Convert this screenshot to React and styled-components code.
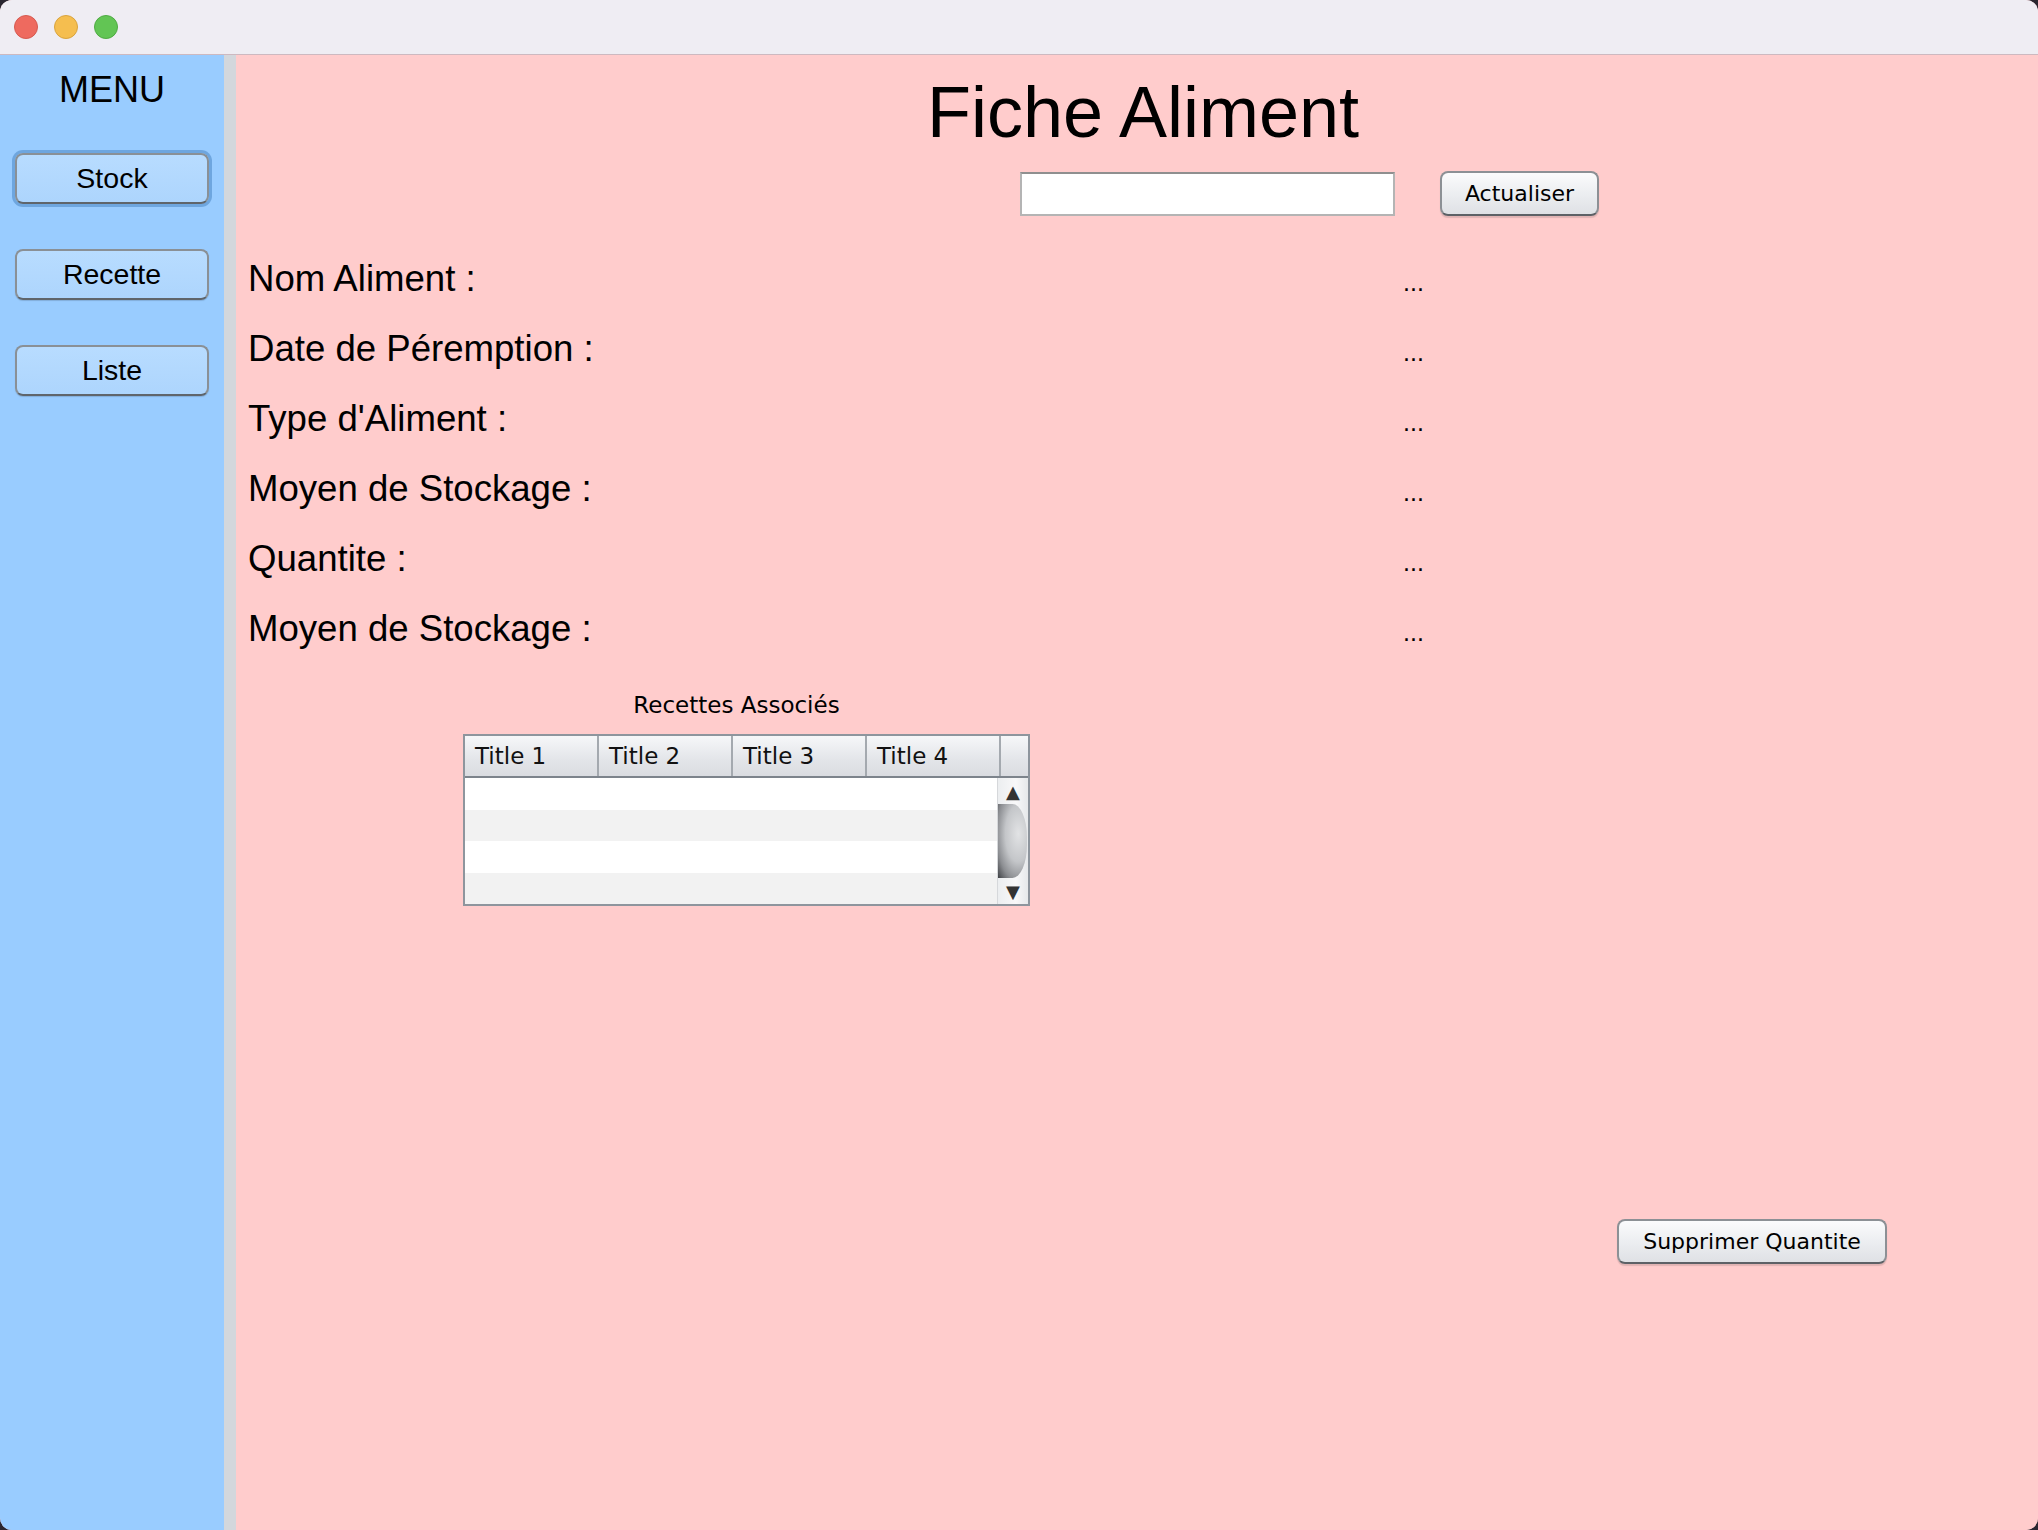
import React from 'react'
import styled, { createGlobalStyle } from 'styled-components'

const GlobalStyle = createGlobalStyle`
  html, body {
    margin: 0;
    padding: 0;
    background: #2a2630;
  }
  * {
    box-sizing: border-box;
  }
`

const fields = [
  'Nom Aliment :',
  'Date de Péremption :',
  "Type d'Aliment :",
  'Moyen de Stockage :',
  'Quantite :',
  'Moyen de Stockage :',
]

const columns = ['Title 1', 'Title 2', 'Title 3', 'Title 4']

const App = () => {
  return (
    <>
      <GlobalStyle />
      <Window>
        <TitleBar>
          <Light color='#ee6a5f' border='#d65a50' />
          <Light color='#f5be4f' border='#d9a43e' />
          <Light color='#62c554' border='#4fab43' />
        </TitleBar>
        <Body>
          <Sidebar>
            <MenuTitle>MENU</MenuTitle>
            <MenuButton focused>Stock</MenuButton>
            <MenuButton>Recette</MenuButton>
            <MenuButton>Liste</MenuButton>
          </Sidebar>
          <Divider />
          <Main>
            <Title>Fiche Aliment</Title>
            <SearchRow>
              <SearchInput type='text' />
              <MacButton>Actualiser</MacButton>
            </SearchRow>
            <Fields>
              {fields.map((f, i) => (
                <FieldRow key={i}>
                  <Label>{f}</Label>
                  <Value>...</Value>
                </FieldRow>
              ))}
            </Fields>
            <TableSection>
              <Caption>Recettes Associés</Caption>
              <Table>
                <HeaderRow>
                  {columns.map((c) => (
                    <HeaderCell key={c}>{c}</HeaderCell>
                  ))}
                  <HeaderCorner />
                </HeaderRow>
                <TableBody>
                  <Rows>
                    {[0, 1, 2, 3].map((r) => (
                      <Row key={r} odd={r % 2 === 1} />
                    ))}
                  </Rows>
                  <ScrollBar>
                    <Arrow>▲</Arrow>
                    <Thumb />
                    <Arrow>▼</Arrow>
                  </ScrollBar>
                </TableBody>
              </Table>
            </TableSection>
            <Footer>
              <MacButton wide>Supprimer Quantite</MacButton>
            </Footer>
          </Main>
        </Body>
      </Window>
    </>
  )
}

const Window = styled.div`
  display: flex;
  flex-direction: column;
  width: 2038px;
  height: 1530px;
  border-radius: 12px;
  overflow: hidden;
  background: #ffcccc;
`

const TitleBar = styled.div`
  display: flex;
  align-items: center;
  gap: 16px;
  height: 55px;
  padding-left: 14px;
  background: #efedf3;
  border-bottom: 1px solid #cdb9c0;
  flex-shrink: 0;
`

const Light = styled.span`
  width: 24px;
  height: 24px;
  border-radius: 50%;
  background: ${(p) => p.color};
  border: 1px solid ${(p) => p.border};
`

const Body = styled.div`
  display: flex;
  flex: 1;
  min-height: 0;
`

const Sidebar = styled.nav`
  display: flex;
  flex-direction: column;
  align-items: center;
  width: 224px;
  padding-top: 14px;
  background: #99ccff;
  font-family: 'Liberation Sans', Arial, sans-serif;
`

const MenuTitle = styled.div`
  font-size: 36px;
  color: #000;
  margin-bottom: 42px;
`

const MenuButton = styled.button`
  width: 194px;
  height: 51px;
  margin-bottom: 45px;
  border-radius: 8px;
  border: 2px solid #8a9096;
  border-bottom-color: #5f656b;
  background: linear-gradient(#b8dcff, #add5fd);
  font-family: 'Liberation Sans', Arial, sans-serif;
  font-size: 28.5px;
  color: #000;
  box-shadow: ${(p) =>
    p.focused ? '0 0 0 3px rgba(74, 134, 196, 0.55)' : '0 1px 1px rgba(0,0,0,0.15)'};
`

const Divider = styled.div`
  width: 12px;
  background: #d3d7dc;
`

const Main = styled.main`
  display: flex;
  flex-direction: column;
  flex: 1;
  padding: 21px 0 0 12px;
  background: #ffcccc;
`

const Title = styled.h1`
  margin: 0;
  text-align: center;
  font-family: 'Liberation Sans', Arial, sans-serif;
  font-weight: normal;
  font-size: 72px;
  line-height: 72px;
  color: #000;
`

const SearchRow = styled.div`
  display: flex;
  align-items: center;
  gap: 45px;
  margin-top: 23px;
  padding-left: 772px;
`

const SearchInput = styled.input`
  width: 375px;
  height: 44px;
  border: 2px solid #b4b4b4;
  border-top-color: #8f8f8f;
  background: #fff;
  outline: none;
`

const MacButton = styled.button`
  width: ${(p) => (p.wide ? '270px' : '159px')};
  height: 45px;
  border-radius: 8px;
  border: 2px solid #8c9095;
  border-bottom-color: #5d6166;
  background: linear-gradient(#fbfbfc, #eceef1 50%, #dfe1e5);
  font-family: 'DejaVu Sans', 'Lucida Grande', sans-serif;
  font-size: 22px;
  color: #000;
  box-shadow: 0 2px 1px rgba(0, 0, 0, 0.12);
`

const Fields = styled.div`
  display: flex;
  flex-direction: column;
  margin-top: 28px;
`

const FieldRow = styled.div`
  display: flex;
  align-items: baseline;
  height: 70px;
  line-height: 70px;
`

const Label = styled.span`
  width: 1155px;
  font-family: 'Liberation Sans', Arial, sans-serif;
  font-size: 36.6px;
  color: #000;
`

const Value = styled.span`
  font-family: 'Liberation Sans', Arial, sans-serif;
  font-size: 25px;
  color: #000;
`

const TableSection = styled.section`
  display: flex;
  flex-direction: column;
  width: 567px;
  margin: 27px 0 0 215px;
`

const Caption = styled.div`
  padding-right: 20px;
  text-align: center;
  font-family: 'DejaVu Sans', 'Lucida Grande', sans-serif;
  font-size: 23px;
  line-height: 28px;
  color: #000;
  margin-bottom: 15px;
`

const Table = styled.div`
  display: flex;
  flex-direction: column;
  border: 2px solid #8e959d;
  background: #fff;
`

const HeaderRow = styled.div`
  display: flex;
  height: 42px;
  border-bottom: 2px solid #7d848c;
  background: linear-gradient(#f6f7f9, #e3e5e9 60%, #dadce1);
`

const HeaderCell = styled.div`
  width: 134px;
  padding-left: 10px;
  border-right: 2px solid #a4a9af;
  font-family: 'DejaVu Sans', 'Lucida Grande', sans-serif;
  font-size: 23px;
  line-height: 40px;
  color: #111;
`

const HeaderCorner = styled.div`
  flex: 1;
`

const TableBody = styled.div`
  display: flex;
  height: 126px;
`

const Rows = styled.div`
  display: flex;
  flex-direction: column;
  flex: 1;
`

const Row = styled.div`
  height: 31.5px;
  background: ${(p) => (p.odd ? '#f2f2f2' : '#ffffff')};
`

const ScrollBar = styled.div`
  display: flex;
  flex-direction: column;
  align-items: stretch;
  width: 31px;
  border-left: 1px solid #d6d8db;
  background: linear-gradient(90deg, #eceef0, #f8f8f9 60%, #e6e8ea);
`

const Arrow = styled.div`
  height: 26px;
  display: flex;
  align-items: center;
  justify-content: center;
  font-family: 'DejaVu Sans', sans-serif;
  font-size: 18px;
  color: #333;
`

const Thumb = styled.div`
  flex: 1;
  margin: 0 1px 0 0;
  border-radius: 0 50% 50% 0 / 0 45% 45% 0;
  background: radial-gradient(ellipse at 70% 40%, #e2e3e5 0%, #c4c6c9 45%, #8c8e92 75%, #3f4145 100%);
`

const Footer = styled.div`
  display: flex;
  justify-content: flex-end;
  padding-right: 151px;
  margin-top: 313px;
`

export default App
